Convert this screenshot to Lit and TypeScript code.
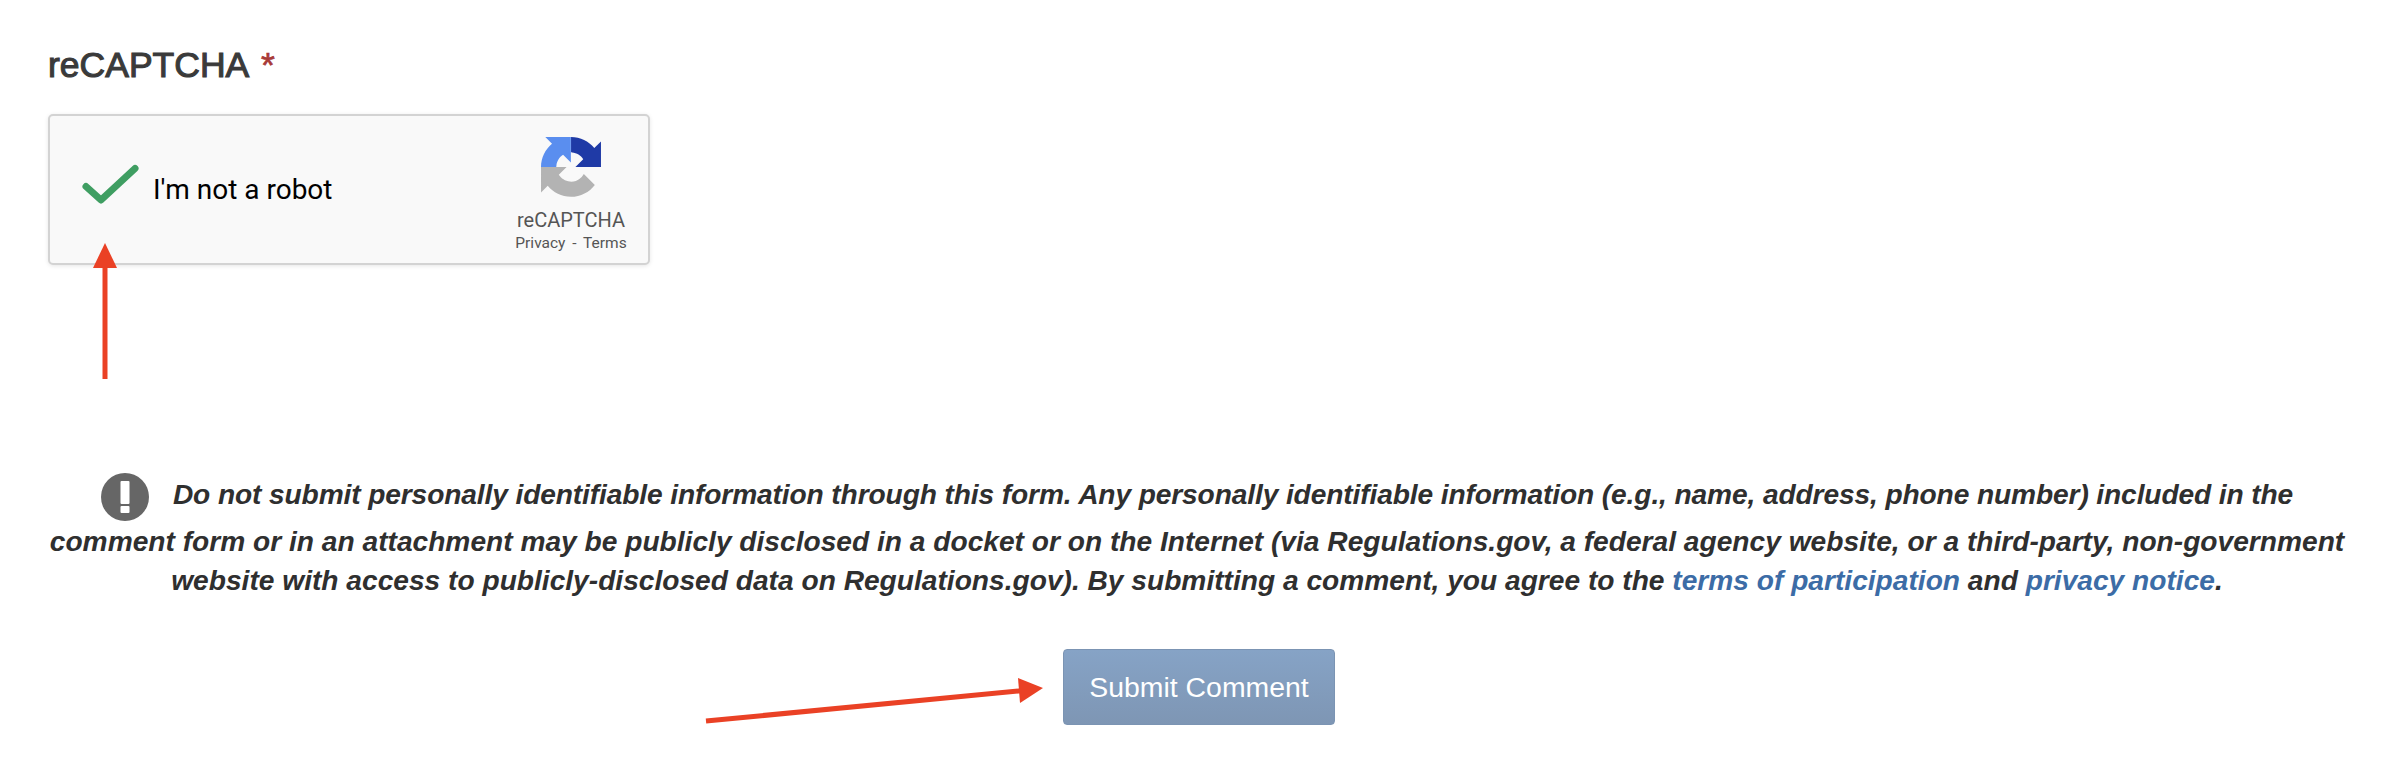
import { LitElement, html, css, svg } from "lit";
import { customElement } from "lit/decorators.js";

@customElement("app-root")
export class AppRoot extends LitElement {
  static styles = css`
    :host {
      display: block;
      position: relative;
      width: 2394px;
      height: 758px;
      overflow: hidden;
      background: #fff;
      font-family: "Liberation Sans", Arial, sans-serif;
      color: #333;
    }
    .page {
      display: flex;
      flex-direction: column;
      padding: 46px 0 0 48px;
      box-sizing: border-box;
      height: 100%;
    }
    .title {
      margin: 0;
      font-size: 35.5px;
      line-height: 38px;
      font-weight: 400;
      -webkit-text-stroke: 1.1px #3a3a3a;
      color: #3a3a3a;
    }
    .req {
      color: #a83a38;
      -webkit-text-stroke: 0.7px #a83a38;
      margin-left: 4px;
    }
    .card {
      margin-top: 30px;
      width: 602px;
      height: 151px;
      box-sizing: border-box;
      border: 2px solid #d3d3d3;
      border-radius: 5px;
      background: #f9f9f9;
      box-shadow: 0 1px 4px rgba(0, 0, 0, 0.1);
      display: flex;
      align-items: stretch;
      font-family: Roboto, "Liberation Sans", sans-serif;
    }
    .left {
      flex: 1;
      display: flex;
      align-items: center;
      gap: 11px;
      padding-left: 32px;
      color: #000;
      font-size: 28px;
    }
    .check {
      width: 60px;
      height: 48px;
      flex: none;
      overflow: visible;
    }
    .brand {
      width: 124px;
      margin-right: 15px;
      display: flex;
      flex-direction: column;
      align-items: center;
      padding-top: 21px;
      color: #555;
    }
    .logo {
      width: 60px;
      height: 60px;
    }
    .brand-name {
      font-size: 20px;
      line-height: 24px;
      margin-top: 11px;
    }
    .brand-links {
      font-size: 15.5px;
      line-height: 20px;
      margin-top: 1px;
      word-spacing: 3px;
      white-space: pre;
    }
    .notice {
      margin: 206px 0 0 -48px;
      padding: 0 40px;
      text-align: center;
      font-size: 28.15px;
      line-height: 39px;
      font-weight: 700;
      font-style: italic;
      color: #2f2f2f;
    }
    .notice::first-line {
      letter-spacing: -0.12px;
    }
    .notice a {
      color: #3c6ca6;
      text-decoration: none;
    }
    .warn {
      width: 48px;
      height: 48px;
      vertical-align: middle;
      margin: 2px 24px 1px 0;
    }
    .actions {
      margin: 49px 0 0 -48px;
      display: flex;
      justify-content: center;
      padding-left: 4px;
    }
    .submit {
      width: 272px;
      height: 76px;
      box-sizing: border-box;
      border: 1px solid #7b94b3;
      border-radius: 4px;
      background: linear-gradient(#86a3c6, #7e96b4);
      color: #fff;
      font-family: inherit;
      font-size: 28.4px;
    }
    .marks {
      position: absolute;
      inset: 0;
      width: 100%;
      height: 100%;
      pointer-events: none;
    }
  `;

  render() {
    return html`
      <div class="page">
        <h2 class="title">reCAPTCHA <span class="req">*</span></h2>
        <div class="card">
          <div class="left">
            <svg class="check" viewBox="0 0 60 48">
              <path d="M4 20.5 L19 34 L53 2.5" fill="none" stroke="#3f9e62" stroke-width="7" stroke-linecap="round" stroke-linejoin="round" />
            </svg>
            <span>I'm not a robot</span>
          </div>
          <div class="brand">
            <svg class="logo" viewBox="0 0 64 64">
              <path fill="#1f3aa6" d="M64 31.955l-.033-1.37V4.687l-7.16 7.16C50.948 4.674 42.033.093 32.05.093v16.27c.485 0 .86.057 1.135.163 4.976.393 9.288 3.14 11.828 7.124l-8.307 8.307 26.296-.002z" />
              <path fill="#5a8eef" d="M31.862.001l-1.37.033H4.594l7.16 7.16C4.58 13.053 0 21.968 0 31.95h16.26c0-.485.057-.86.163-1.135.393-4.976 3.14-9.288 7.124-11.828l8.315 8.307V.001z" />
              <path fill="#b3b3b3" d="M.001 32l.033 1.37v25.898l7.16-7.16c5.86 7.173 14.774 11.754 24.757 11.754 10.4 0 19.622-4.96 25.458-12.64L45.673 39.362a15.55 15.55 0 0 1-4.754 5.334c-2.05 1.6-4.952 2.906-8.968 2.906-.485 0-.86-.057-1.135-.163-4.976-.393-9.288-3.14-11.828-7.124l8.307-8.307L.001 32z" />
            </svg>
            <div class="brand-name">reCAPTCHA</div>
            <div class="brand-links">Privacy - Terms</div>
          </div>
        </div>
        <p class="notice">
          <svg class="warn" viewBox="0 0 48 48">
            <circle cx="24" cy="24" r="24" fill="#666" />
            <rect x="19.5" y="8" width="9" height="23" rx="1" fill="#fff" />
            <rect x="19.5" y="33" width="9" height="7" rx="1" fill="#fff" />
          </svg>Do not submit personally identifiable information through this form. Any personally identifiable information (e.g., name, address, phone number) included in the comment form or in an attachment may be publicly disclosed in a docket or on the Internet (via Regulations.gov, a federal agency website, or a third-party, non-government website with access to publicly-disclosed data on Regulations.gov). By submitting a comment, you agree to the <a href="#">terms of participation</a> and <a href="#">privacy notice</a>.
        </p>
        <div class="actions"><button class="submit">Submit Comment</button></div>
      </div>
      <svg class="marks" viewBox="0 0 2394 758">
        ${svg`<path d="M105 379 V262" stroke="#ea4125" stroke-width="5" fill="none" />
        <path d="M93 268 L105 243 L117 268 Z" fill="#ea4125" />
        <path d="M706 721 L1024 690.5" stroke="#ea4125" stroke-width="5" fill="none" />
        <path d="M1018 678 L1043 688 L1020 703 Z" fill="#ea4125" />`}
      </svg>
    `;
  }
}
